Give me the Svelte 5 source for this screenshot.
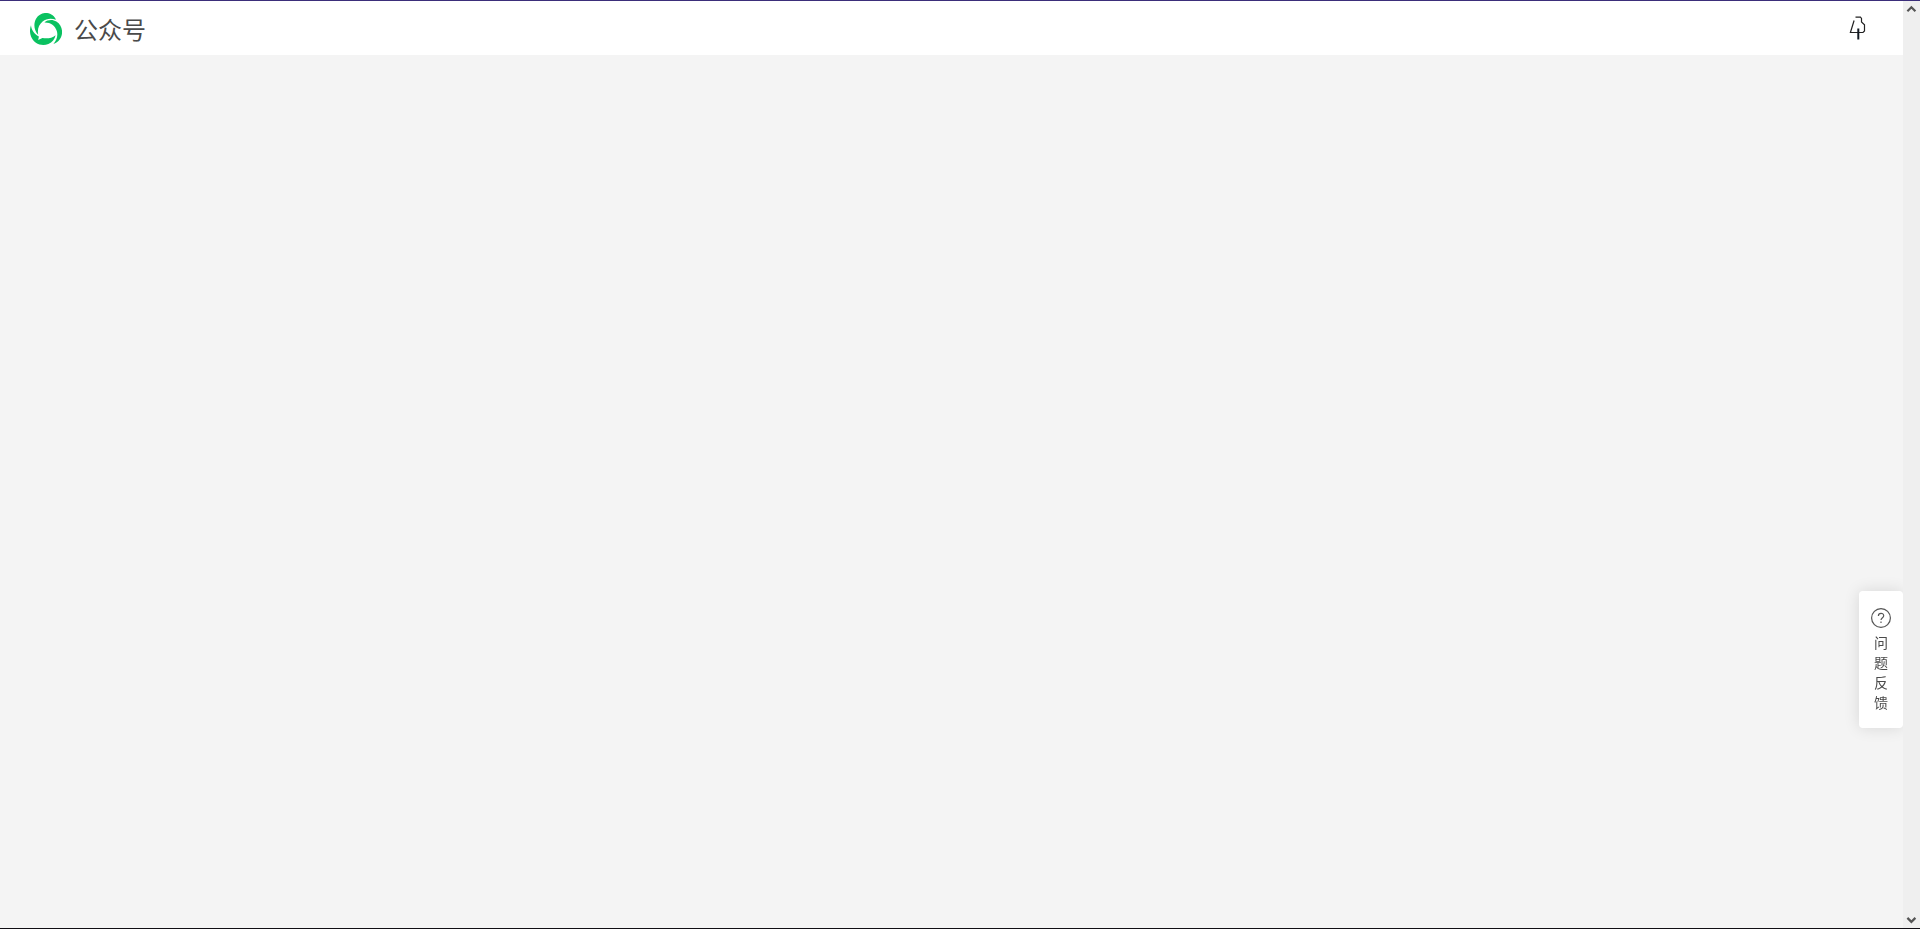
<script lang="ts">
  const feedbackLabel = ['问', '题', '反', '馈'];

  function scrollPage(direction: number) {
    window.scrollBy({ top: direction * 40 });
  }
</script>

<div class="page">
  <div class="content">
    <header class="header">
      <a class="brand" href="/">
        <svg class="logo" viewBox="0 0 32 32" aria-hidden="true">
          <path d="M8.2 21.8C3.8 17.5 3.3 10.3 6.2 5.6C9.6-.6 18-1.7 22.6 2.3C24.3 3.7 25.4 5.2 25.9 6.8C21.4 5.1 16.4 5.4 12.6 8.6C8.6 12 7.2 16.6 8.2 21.8Z" />
          <path d="M14.4 9.4C17.9 6.7 22.6 6.1 26.4 8.6C32.6 12.4 33.7 20.8 29.8 26.3C28.1 28.7 25.8 30.4 23.4 31C26.7 27.5 28.2 22.8 26.8 18C25.2 12.4 20.5 9.2 14.4 9.4Z" />
          <path d="M1 12.2C1.3 16.6 4 20.9 8.9 23.6L8.2 27L12.4 24.9C17.2 26 21.7 25.2 25.6 22.2C24.8 26 22.2 29.4 18.4 30.9C11.4 33.8 3.6 30.3 1 23.4C-.4 19.7-.3 15.7 1 12.2Z" />
        </svg>
        <span class="name">公众号</span>
      </a>
      <button class="account" aria-label="account">
        <svg viewBox="0 1 20 26" aria-hidden="true">
          <path d="M6.5 2.2H11.4L12.5 3.4V6.9L15.5 9.8V16L14 17.5H1.4L5.1 5.5" />
          <path class="stem" d="M9.3 13.5V24.5" />
        </svg>
      </button>
    </header>
    <main></main>
  </div>

  <div class="scrollbar">
    <button aria-label="up" onclick={() => scrollPage(-1)}>
      <svg viewBox="0 0 17 16" aria-hidden="true"><path d="M4.4 10.3L8.4 6.3L12.4 10.3" /></svg>
    </button>
    <button aria-label="down" onclick={() => scrollPage(1)}>
      <svg viewBox="0 0 17 16" aria-hidden="true"><path d="M4.4 5.9L8.4 9.9L12.4 5.9" /></svg>
    </button>
  </div>

  <button class="feedback">
    <svg viewBox="0 0 20 20" aria-hidden="true">
      <circle cx="10" cy="10" r="9.4" />
      <path d="M7.4 7.9C7.4 4.5 12.7 4.5 12.7 7.7C12.7 9.6 10 9.8 10 12.1" />
      <path d="M10 13.6V15" />
    </svg>
    {#each feedbackLabel as char}
      <span>{char}</span>
    {/each}
  </button>
</div>

<style>
  :global(body) {
    background: #f4f4f4;
  }

  .page {
    display: flex;
    box-sizing: border-box;
    min-height: 100vh;
    border-top: 1px solid #3b2e7a;
    border-bottom: 1px solid #100e14;
    font-family: "Noto Sans CJK SC", sans-serif;
  }

  button {
    padding: 0;
    border: none;
    background: none;
    font-family: inherit;
    cursor: pointer;
  }

  svg {
    display: block;
  }

  .content {
    flex: 1;
  }

  .header {
    display: flex;
    align-items: center;
    justify-content: space-between;
    box-sizing: border-box;
    height: 54px;
    padding: 2px 34px 0 30px;
    background: #fff;
  }

  .brand {
    display: flex;
    align-items: center;
    gap: 12px;
    color: #4a4a4a;
    text-decoration: none;
  }

  .logo {
    width: 32px;
    height: 32px;
    fill: #0ac160;
  }

  .name {
    font-size: 24px;
    line-height: 32px;
  }

  .account svg {
    width: 20px;
    height: 26px;
    fill: none;
    stroke: #222;
    stroke-width: 1.2;
  }

  .account .stem {
    stroke: #111820;
    stroke-width: 2;
  }

  .scrollbar {
    display: flex;
    flex-direction: column;
    justify-content: space-between;
    width: 17px;
    background: #efefef;
  }

  .scrollbar svg {
    width: 17px;
    height: 16px;
    fill: none;
    stroke: #555;
    stroke-width: 2.2;
  }

  .feedback {
    position: fixed;
    right: 17px;
    bottom: 201px;
    display: flex;
    flex-direction: column;
    align-items: center;
    width: 44px;
    padding: 17px 0 16px;
    border-radius: 4px;
    background: #fff;
    box-shadow: 0 0 16px rgba(0, 0, 0, 0.12);
    clip-path: inset(-32px 0 -32px -32px);
    color: #4a4a4a;
    font-size: 14px;
    line-height: 20px;
  }

  .feedback svg {
    width: 20px;
    height: 20px;
    margin-bottom: 4px;
    fill: none;
    stroke: #555;
    stroke-width: 1.2;
  }
</style>
